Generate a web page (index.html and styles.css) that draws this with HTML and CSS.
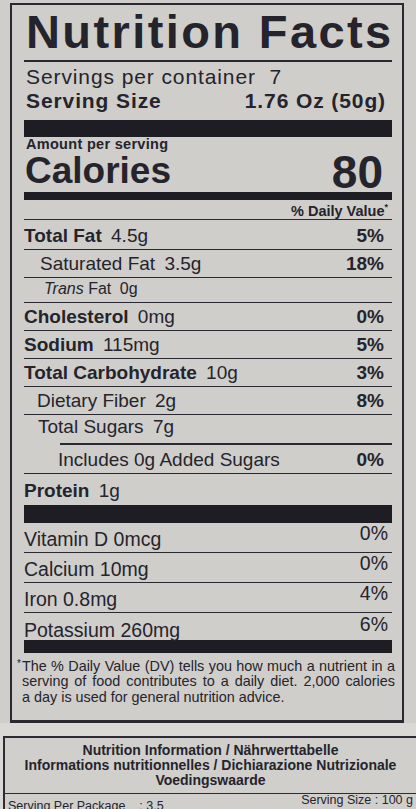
FILE: index.html
```html
<!DOCTYPE html>
<html lang="en">
<head>
  <meta charset="UTF-8" />
  <title>Nutrition Facts</title>
  <link rel="stylesheet" href="styles.css">
</head>
<body>
  <div class="label">
    <h1 class="title">Nutrition Facts</h1>
    <div class="servings">Servings per container&nbsp; 7</div>
    <div class="size"><span>Serving Size</span><span>1.76 Oz (50g)</span></div>

    <div class="bar thick"></div>
    <div class="amount">Amount per serving</div>
    <div class="calories">
      <span class="cal-label">Calories</span>
      <span class="cal-num">80</span>
    </div>
    <div class="bar mid"></div>
    <div class="dv-head">% Daily Value<sup>*</sup></div>

    <div class="row first"><span><b>Total Fat</b> <span class="amt">4.5g</span></span><b>5%</b></div>
    <div class="row sub"><span>Saturated Fat <span class="amt">3.5g</span></span><b>18%</b></div>
    <div class="row trans"><span><i>Trans</i> Fat <span class="amt">0g</span></span></div>
    <div class="row"><span><b>Cholesterol</b> <span class="amt">0mg</span></span><b>0%</b></div>
    <div class="row"><span><b>Sodium</b> <span class="amt">115mg</span></span><b>5%</b></div>
    <div class="row"><span><b>Total Carbohydrate</b> <span class="amt">10g</span></span><b>3%</b></div>
    <div class="row fiber"><span>Dietary Fiber <span class="amt">2g</span></span><b>8%</b></div>
    <div class="row sugars"><span>Total Sugars <span class="amt">7g</span></span></div>
    <div class="rule short"></div>
    <div class="row added"><span>Includes 0g Added Sugars</span><b>0%</b></div>
    <div class="row protein"><span><b>Protein</b> <span class="amt">1g</span></span></div>

    <div class="bar thick"></div>
    <div class="row vit"><span>Vitamin D 0mcg</span><span class="pct">0%</span></div>
    <div class="row vit"><span>Calcium 10mg</span><span class="pct">0%</span></div>
    <div class="row vit"><span>Iron 0.8mg</span><span class="pct">4%</span></div>
    <div class="row vit last"><span>Potassium 260mg</span><span class="pct">6%</span></div>
    <div class="bar foot"></div>

    <p class="note">
      <span class="line"><sup>*</sup>The % Daily Value (DV) tells you how much a nutrient in a</span>
      <span class="line">serving of food contributes to a daily diet. 2,000 calories</span>
      <span class="line end">a day is used for general nutrition advice.</span>
    </p>
  </div>

  <div class="lower">
    <div class="panel">
      <div class="panel-head">
        Nutrition Information / Nährwerttabelle<br>
        Informations nutritionnelles / Dichiarazione Nutrizionale<br>
        Voedingswaarde
      </div>
      <div class="panel-row">
        <span class="per-pack">Serving Per Package&nbsp;&nbsp;&nbsp; : 3.5</span>
        <span class="per-size">Serving Size : 100 g</span>
      </div>
    </div>
  </div>
</body>
</html>
```

FILE: styles.css
```css
body {
  margin: 0;
  width: 416px;
  height: 809px;
  overflow: hidden;
  background: #cfcecb;
  font-family: 'Liberation Sans', Arial, sans-serif;
  color: #25242c;
}

.label {
  margin: 3px 0 0 10px;
  width: 394px;
  box-sizing: border-box;
  border: 2px solid #2a2932;
  border-bottom-width: 3px;
  padding: 0 10px 15px 12px;
}

.title {
  margin: 0;
  padding: 2px 0 3px 2px;
  font-size: 47px;
  line-height: 50px;
  font-weight: 700;
  letter-spacing: 2.4px;
  white-space: nowrap;
  border-bottom: 2px solid #2a2932;
}

.servings {
  font-size: 21px;
  line-height: 22px;
  letter-spacing: 0.9px;
  padding: 4px 0 0 2px;
}

.size {
  display: flex;
  justify-content: space-between;
  margin-top: 1px;
  padding: 0 6px 0 2px;
  font-size: 21px;
  line-height: 24px;
  font-weight: 700;
  letter-spacing: 0.9px;
}

.bar {
  background: #1e1d24;
}

.bar.thick {
  height: 17px;
  margin-top: 7px;
}

.bar.mid {
  height: 8px;
}

.bar.foot {
  height: 13px;
}

.protein + .bar.thick {
  height: 18px;
  margin-top: 0;
}

.amount {
  font-size: 14.5px;
  line-height: 15px;
  font-weight: 700;
  letter-spacing: 0.3px;
  padding-left: 2px;
}

.calories {
  display: flex;
  justify-content: space-between;
  align-items: flex-end;
  font-weight: 700;
  padding-top: 1px;
}

.cal-label {
  font-size: 37px;
  line-height: 34px;
  padding: 0 0 4px 1px;
}

.cal-num {
  font-size: 46px;
  line-height: 39px;
  padding-right: 9px;
}

.dv-head {
  text-align: right;
  font-size: 14.5px;
  line-height: 16px;
  font-weight: 700;
  padding: 3px 4px 0 0;
  border-bottom: 1.5px solid #2a2932;
}

.dv-head sup {
  font-size: 9px;
  vertical-align: 6px;
  line-height: 0;
}

.row {
  display: flex;
  justify-content: space-between;
  align-items: flex-end;
  height: 28px;
  box-sizing: border-box;
  padding: 0 8px 3.5px 0;
  font-size: 19px;
  line-height: 20px;
  border-bottom: 1.5px solid #2a2932;
  white-space: nowrap;
}

.row .amt {
  margin-left: 4px;
}

.row.first {
  height: 30px;
}

.row.sub {
  padding-left: 16px;
}

.row.trans {
  height: 25px;
  padding-left: 20px;
  padding-bottom: 3px;
  font-size: 16px;
}

.row.fiber {
  padding-left: 13px;
}

.row.sugars {
  padding-left: 14px;
  border-bottom: none;
  padding-bottom: 6px;
}

.rule.short {
  height: 1.5px;
  margin-left: 36px;
  background: #2a2932;
}

.row.added {
  height: 29.5px;
  padding-left: 34px;
  padding-bottom: 3px;
}

.row.protein {
  height: 30.5px;
  border-bottom: none;
  padding-bottom: 3.5px;
  padding-left: 0;
}

.row.vit {
  height: 30px;
  padding-bottom: 3px;
  padding-right: 4px;
  font-size: 19.5px;
}

.row.vit .pct {
  margin-bottom: 6px;
}

.row.vit.last {
  height: 27px;
  border-bottom: none;
  padding-bottom: 0;
}

.note {
  margin: 0 -3px 0 -2px;
  padding-top: 6px;
  font-size: 14.4px;
  line-height: 15.5px;
}

.note .line {
  display: block;
  text-align: justify;
  text-align-last: justify;
}

.note .line.end {
  text-align-last: left;
}

.note sup {
  font-size: 10px;
  vertical-align: 4px;
  line-height: 0;
  margin-left: -5px;
  margin-right: 1px;
}

.lower {
  padding-top: 13px;
  background: #dad9d6;
}

.panel {
  margin-left: 3px;
  border-top: 2px solid #2d2c34;
  border-left: 2px solid #2d2c34;
  background: #d0cfcc;
}

.panel-head {
  text-align: center;
  font-size: 14px;
  line-height: 15px;
  font-weight: 700;
  padding: 5px 0 5px;
  border-bottom: 1.5px solid #2d2c34;
}

.panel-row {
  display: flex;
  justify-content: space-between;
  align-items: flex-start;
  font-size: 12.5px;
  line-height: 13px;
  padding: 0 3px 20px 3px;
}

.per-pack {
  padding-top: 6px;
}
```
